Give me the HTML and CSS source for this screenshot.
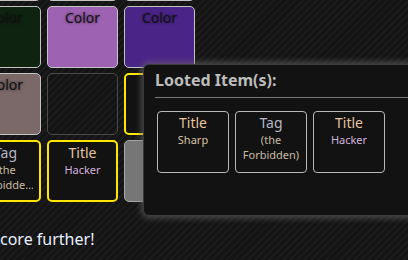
FILE: index.html
```html
<!DOCTYPE html>
<html lang="en">
<head>
    <meta charset="UTF-8">
    <meta name="viewport" content="width=device-width, initial-scale=1.0">
    <title>Loot</title>
    <link rel="stylesheet" href="styles.css">
</head>
<body>
    <main class="board">
        <div class="inventory">
            <div class="cell"></div>
            <div class="cell"></div>
            <div class="cell"></div>

            <div class="cell swatch green"><span class="swatch-name">Color</span></div>
            <div class="cell swatch amethyst"><span class="swatch-name">Color</span></div>
            <div class="cell swatch violet"><span class="swatch-name">Color</span></div>

            <div class="cell swatch mauve"><span class="swatch-name">Color</span></div>
            <div class="cell empty"></div>
            <div class="cell picked"></div>

            <div class="cell picked">
                <span class="item-kind tag">Tag</span>
                <span class="item-name forbidden">(the Forbidden)</span>
            </div>
            <div class="cell picked">
                <span class="item-kind title">Title</span>
                <span class="item-name hacker">Hacker</span>
            </div>
            <div class="cell locked"></div>
        </div>

        <p class="hint">core further!</p>
    </main>

    <div class="loot-popup">
        <h3>Looted Item(s):</h3>
        <div class="loot-list">
            <div class="loot-item">
                <span class="item-kind title">Title</span>
                <span class="item-name sharp">Sharp</span>
            </div>
            <div class="loot-item">
                <span class="item-kind tag">Tag</span>
                <span class="item-name forbidden">(the Forbidden)</span>
            </div>
            <div class="loot-item">
                <span class="item-kind title">Title</span>
                <span class="item-name hacker">Hacker</span>
            </div>
        </div>
    </div>
</body>
</html>
```

FILE: styles.css
```css
body {
    font-family: "Noto Sans", "Open Sans", sans-serif;
    margin: 0;
    padding: 0;
    width: 408px;
    height: 260px;
    overflow: hidden;
    position: relative;
    background-color: #151515;
    background-image: repeating-linear-gradient(135deg, #141414 0 3px, #1b1b1b 3px 5px);
    color: #ddd;
}

/* inventory is scrolled, so the first column and row are cut off */
.inventory {
    display: grid;
    grid-template-columns: repeat(3, 71px);
    grid-auto-rows: 62px;
    column-gap: 6px;
    row-gap: 5px;
    margin: -61px 0 0 -30px;
}

.cell {
    box-sizing: border-box;
    border: 1px solid #c4c4c4;
    border-radius: 5px;
    padding: 1px 6px 0;
    text-align: center;
    display: flex;
    flex-direction: column;
    align-items: center;
    overflow: hidden;
}

.cell.empty {
    border-color: #4a4a4a;
    background: transparent;
}

.cell.picked {
    border: 2px solid #ffe600;
    background-color: #121212;
}

.cell.locked {
    background-color: #777;
    border-color: #a8a8a8;
}

.swatch.green { background-color: #0f2410; }
.swatch.amethyst { background-color: #9e62b2; }
.swatch.violet { background-color: #4b2488; }
.swatch.mauve { background-color: #7b6868; }

.swatch-name {
    font-size: 14px;
    color: #111;
    text-shadow: 0 0 3px rgba(0, 0, 0, 0.6);
}

.item-kind {
    font-size: 14px;
}

.item-name {
    font-size: 11px;
    display: -webkit-box;
    -webkit-box-orient: vertical;
    -webkit-line-clamp: 2;
    overflow: hidden;
    overflow-wrap: anywhere;
}

.title { color: #e6c4a0; }
.tag { color: #b6b8c8; }
.sharp { color: #d9c2a2; }
.hacker { color: #d2b2de; }
.forbidden { color: #c8bba4; }

.hint {
    margin: 26px 0 0;
    font-size: 16px;
    color: #e8f0ff;
}

.loot-popup {
    position: absolute;
    left: 143px;
    top: 64px;
    width: 290px;
    height: 152px;
    box-sizing: border-box;
    padding: 4px 0 0 11px;
    background-color: #121212;
    border: 1px solid #3a3a3a;
    border-radius: 6px;
    box-shadow: 0 0 6px 2px rgba(110, 110, 110, 0.6);
}

.loot-popup h3 {
    margin: 0;
    padding-bottom: 6px;
    font-size: 16px;
    font-weight: bold;
    color: #bcbcbc;
    border-bottom: 1px solid #7a7a7a;
}

.loot-list {
    display: flex;
    gap: 6px;
    margin-top: 13px;
    padding-left: 2px;
}

.loot-item {
    box-sizing: border-box;
    width: 72px;
    height: 62px;
    padding-top: 1px;
    border: 1px solid #b8b8b8;
    border-radius: 4px;
    text-align: center;
    display: flex;
    flex-direction: column;
    align-items: center;
}

.loot-item .item-name {
    display: block;
}
```
